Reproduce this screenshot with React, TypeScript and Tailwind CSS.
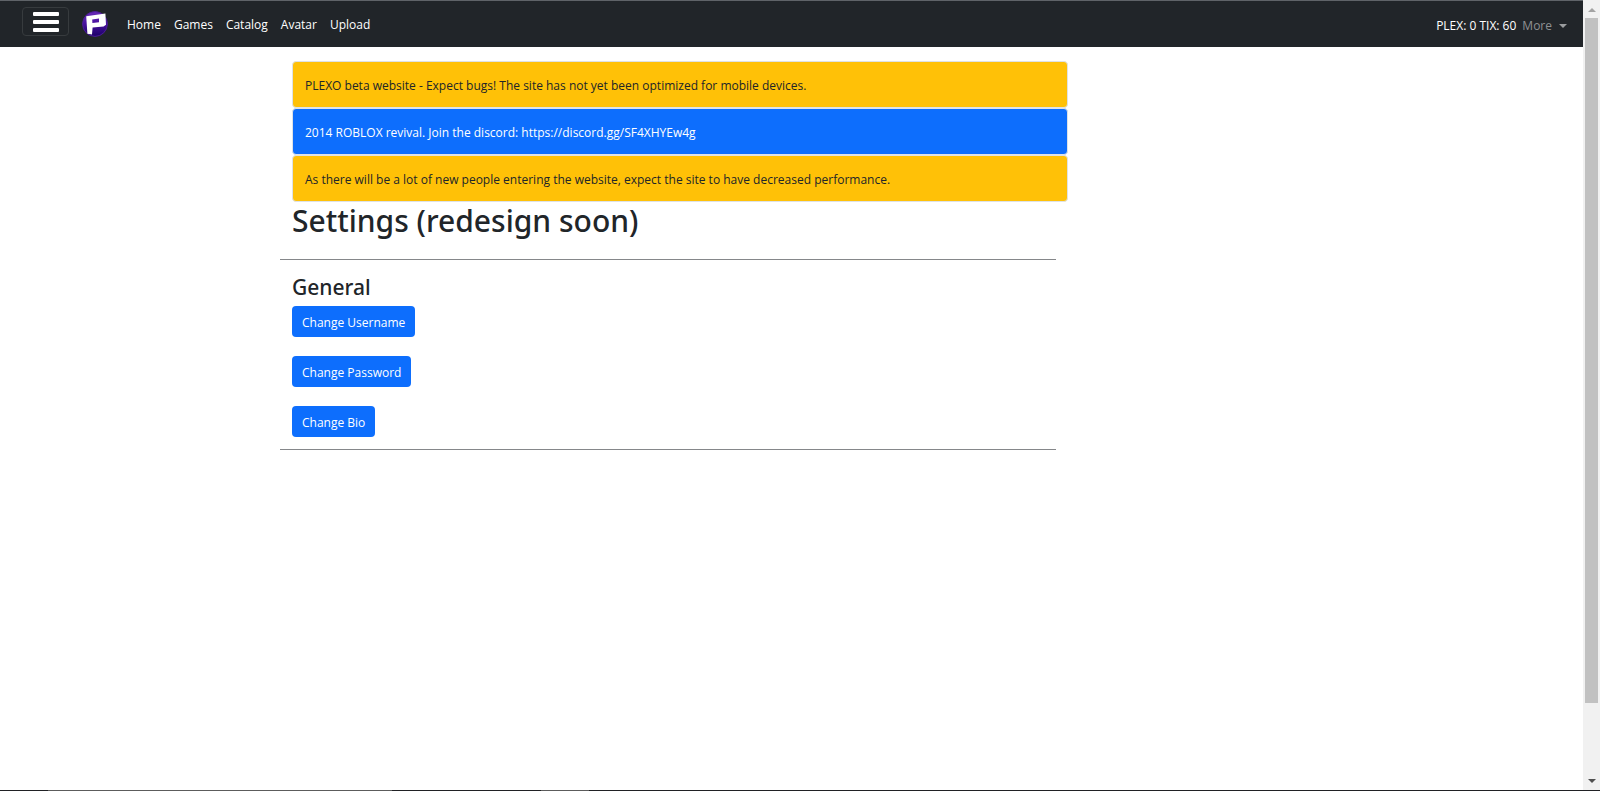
const links = ["Home", "Games", "Catalog", "Avatar", "Upload"];

const alerts = [
  {
    text: "PLEXO beta website - Expect bugs! The site has not yet been optimized for mobile devices.",
    tone: "bg-[#ffc107] text-[#212529]",
  },
  {
    text: "2014 ROBLOX revival. Join the discord: https://discord.gg/SF4XHYEw4g",
    tone: "bg-[#0d6efd] text-white",
  },
  {
    text: "As there will be a lot of new people entering the website, expect the site to have decreased performance.",
    tone: "bg-[#ffc107] text-[#212529]",
  },
];

const actions = ["Change Username", "Change Password", "Change Bio"];

function Logo() {
  return (
    <svg viewBox="0 0 26 26" className="size-[26px]" role="img" aria-label="Plexo">
      <defs>
        <linearGradient id="disc" x1="0" y1="0" x2="0" y2="1">
          <stop offset="0" stopColor="#6a2cb8" />
          <stop offset="0.45" stopColor="#4a12a0" />
          <stop offset="1" stopColor="#1c0068" />
        </linearGradient>
      </defs>
      <circle cx="13" cy="13" r="12.4" fill="url(#disc)" stroke="#4c1c98" />
      <path
        fill="#fff"
        fillRule="evenodd"
        d="M4.2 5.2 23.4 2.4 24 13.8 21.6 15.4 10.6 16.4 10 23.4 5.4 22.8ZM10.2 8.4 10.4 12 17 11.2 17 7.6Z"
      />
    </svg>
  );
}

function NavBar() {
  return (
    <header className="flex h-[47px] items-center border-t border-[#5f6368] bg-[#212529] pr-4 pl-[22px] text-[12px] font-medium text-white">
      <button
        type="button"
        aria-label="Toggle navigation"
        className="mb-[5px] flex h-[29px] w-[47px] flex-col items-center justify-center gap-1 rounded border border-[#373b3e] pt-px"
      >
        <span className="h-1 w-[26px] rounded-[1px] bg-white" />
        <span className="h-1 w-[26px] rounded-[1px] bg-white" />
        <span className="h-1 w-[26px] rounded-[1px] bg-white" />
      </button>
      <a href="#" className="ml-[13px]">
        <Logo />
      </a>
      <nav className="ml-[19px] flex gap-[13px] pt-0.5">
        {links.map((link) => (
          <a key={link} href="#">
            {link}
          </a>
        ))}
      </nav>
      <div className="ml-auto flex items-center gap-[6px] pt-1">
        <span>PLEX: 0 TIX: 60</span>
        <button type="button" className="flex items-center gap-[7px] text-[#8f9193]">
          More
          <span className="border-x-4 border-t-4 border-x-transparent border-t-[#9b9d9f]" />
        </button>
      </div>
    </header>
  );
}

function ScrollTrack() {
  return (
    <div aria-hidden="true" className="flex w-[17px] shrink-0 flex-col items-center bg-[#f1f1f1] pt-2">
      <span className="border-x-4 border-b-4 border-x-transparent border-b-[#a3a3a3]" />
      <span className="mt-[6px] w-[13px] grow-[684] bg-[#c1c1c1]" />
      <span className="grow-[76]" />
      <span className="mb-[7px] border-x-4 border-t-4 border-x-transparent border-t-[#505050]" />
    </div>
  );
}

export default function App() {
  return (
    <div className="flex min-h-screen flex-col bg-white font-['Open_Sans','Noto_Sans',sans-serif] text-[#212529]">
      <div className="flex grow">
        <div className="min-w-0 grow">
          <NavBar />
          <div className="grid grid-cols-[280fr_776fr_527fr] pt-[14px]">
            <main className="col-start-2">
              <div className="-mr-3 ml-3">
                {alerts.map(({ text, tone }) => (
                  <p
                    key={text}
                    className={`flex min-h-[47px] items-center rounded border border-[#dee2e6] px-3 pt-0.5 text-[12px] ${tone}`}
                  >
                    {text}
                  </p>
                ))}
              </div>
              <h1 className="ml-3 font-['Noto_Sans',sans-serif] text-[30px] leading-[38px] font-medium">
                Settings (redesign soon)
              </h1>
              <hr className="mt-[19px] border-[#85878a]" />
              <section className="ml-3 pt-[13px]">
                <h2 className="font-['Noto_Sans',sans-serif] text-[21px] leading-[28px] font-medium">General</h2>
                <div className="mt-[5px] mb-[12px] flex flex-col items-start gap-[19px]">
                  {actions.map((label) => (
                    <button
                      key={label}
                      type="button"
                      className="h-[31px] rounded bg-[#0d6efd] px-[10px] pt-0.5 text-[12px] font-medium text-white"
                    >
                      {label}
                    </button>
                  ))}
                </div>
              </section>
              <hr className="border-[#85878a]" />
            </main>
          </div>
        </div>
        <ScrollTrack />
      </div>
      <div aria-hidden="true" className="flex h-px bg-[#202124]">
        <span className="ml-[3%] w-[21.5%] bg-[#5c5c5c]" />
        <span className="ml-[9.3%] w-[3%] bg-[#5c5c5c]" />
      </div>
    </div>
  );
}
